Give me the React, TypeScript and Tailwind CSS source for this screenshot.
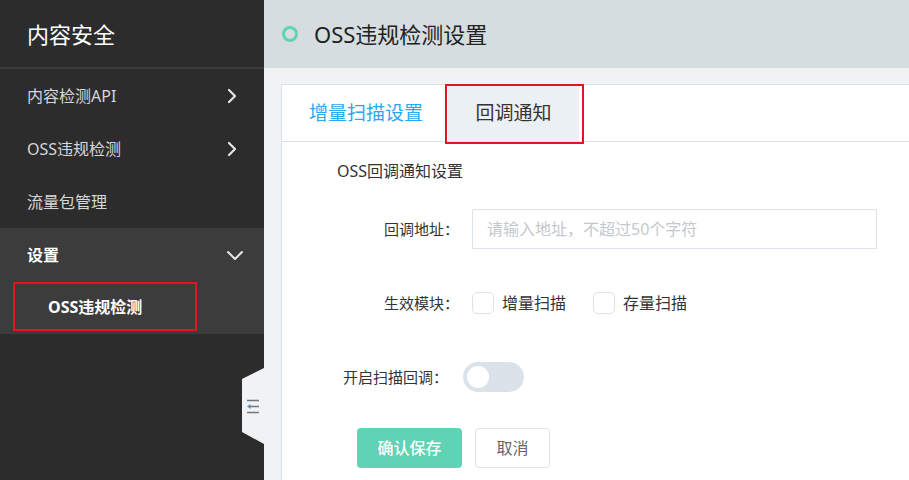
import { useState } from 'react'

const FONT = "font-['Noto_Sans','Noto_Sans_CJK_SC',sans-serif]"

function ChevronRight() {
  return (
    <svg width="10" height="16" viewBox="0 0 10 16" fill="none" aria-hidden="true">
      <path d="M2 2l6 6-6 6" stroke="#e6e6e6" strokeWidth="2.2" strokeLinecap="round" strokeLinejoin="round" />
    </svg>
  )
}

function ChevronDown() {
  return (
    <svg width="18" height="10" viewBox="0 0 18 10" fill="none" aria-hidden="true">
      <path d="M2 2l7 7 7-7" stroke="#e6e6e6" strokeWidth="2" strokeLinecap="round" strokeLinejoin="round" />
    </svg>
  )
}

function CollapseIcon() {
  return (
    <svg width="14" height="15" viewBox="0 0 14 15" fill="none" aria-hidden="true">
      <path d="M1 1.5h12M1 13.5h12" stroke="#777" strokeWidth="1.3" />
      <path d="M4 7.5h9" stroke="#777" strokeWidth="1.3" />
      <path d="M1 7.5l3.5-2.5v5z" fill="#5b8fd0" />
    </svg>
  )
}

interface MenuItem {
  readonly label: string
  readonly hasChildren: boolean
}

const MENU: readonly MenuItem[] = [
  { label: '内容检测API', hasChildren: true },
  { label: 'OSS违规检测', hasChildren: true },
  { label: '流量包管理', hasChildren: false },
]

function Sidebar() {
  return (
    <aside className="relative flex h-full w-[264px] shrink-0 flex-col bg-[#2c2c2c]">
      <div className="flex h-[69px] items-center border-b-2 border-[#3b3b3b] pl-[27px] text-[22px] leading-none text-white">
        内容安全
      </div>
      {MENU.map((item) => (
        <div
          key={item.label}
          className="flex h-[53px] items-center justify-between pl-[27px] pr-[27px] text-[16px] text-[#d8d8d8]"
        >
          <span>{item.label}</span>
          {item.hasChildren ? <ChevronRight /> : null}
        </div>
      ))}
      <div className="bg-[#3c3c3c] pb-[3px]">
        <div className="flex h-[54px] items-center justify-between pl-[27px] pr-[20px] text-[16px] font-bold text-white">
          <span>设置</span>
          <ChevronDown />
        </div>
        <div className="pl-[13px]">
          <div className="flex h-[49px] w-[184px] items-center border-2 border-[#e5141f] pl-[33px] text-[16px] font-bold text-white">
            OSS违规检测
          </div>
        </div>
      </div>

      {/* 收起侧栏把手，压在侧栏右缘 */}
      <div className="absolute right-0 top-[368px] flex h-[76px] w-[22px] items-center justify-center bg-[#f1f2f4] [clip-path:polygon(0_11px,100%_0,100%_100%,0_64px)]">
        <CollapseIcon />
      </div>
    </aside>
  )
}

function Checkbox({ label }: { readonly label: string }) {
  const [checked, setChecked] = useState(false)
  return (
    <label className="flex cursor-pointer items-center gap-[8px]">
      <span
        onClick={() => setChecked((v) => !v)}
        className={
          checked
            ? 'h-[22px] w-[22px] rounded-[5px] border border-[#5fd3b3] bg-[#5fd3b3]'
            : 'h-[22px] w-[22px] rounded-[5px] border border-[#dbe3ea] bg-white'
        }
      />
      <span className="text-[16px] text-[#333]">{label}</span>
    </label>
  )
}

function CallbackForm() {
  const [enabled, setEnabled] = useState(false)
  return (
    <div className="pl-[55px] pt-[18px] text-[#333]">
      <p className="text-[16px] leading-[22px]">OSS回调通知设置</p>

      <div className="mt-[27px] flex items-center pl-[47px]">
        <span className="w-[88px] text-[15px]">回调地址：</span>
        <input
          type="text"
          placeholder="请输入地址，不超过50个字符"
          className="h-[40px] w-[405px] border border-[#dbe3ea] px-[14px] text-[16px] outline-none placeholder:text-[#c3c8ce]"
        />
      </div>

      <div className="mt-[42px] flex items-center pl-[47px]">
        <span className="w-[88px] text-[15px]">生效模块：</span>
        <div className="flex items-center gap-[27px]">
          <Checkbox label="增量扫描" />
          <Checkbox label="存量扫描" />
        </div>
      </div>

      <div className="mt-[47px] flex items-center pl-[6px]">
        <span className="w-[120px] text-[15px]">开启扫描回调：</span>
        <button
          type="button"
          onClick={() => setEnabled((v) => !v)}
          className={
            enabled
              ? 'flex h-[30px] w-[61px] items-center justify-end rounded-full bg-[#5fd3b3] px-[4px]'
              : 'flex h-[30px] w-[61px] items-center rounded-full bg-[#dbe3ea] px-[4px]'
          }
        >
          <span className="h-[22px] w-[22px] rounded-full bg-white" />
        </button>
      </div>

      <div className="mt-[36px] flex items-center gap-[13px] pl-[20px]">
        <button
          type="button"
          className="h-[40px] w-[105px] rounded-[4px] bg-[#5fd3b3] text-[16px] font-medium text-white"
        >
          确认保存
        </button>
        <button
          type="button"
          className="h-[40px] w-[75px] rounded-[4px] border border-[#dbe3ea] bg-white text-[16px] text-[#666]"
        >
          取消
        </button>
      </div>
    </div>
  )
}

export default function App() {
  const [tab, setTab] = useState<'scan' | 'callback'>('callback')
  return (
    <div className={`flex h-[480px] w-full overflow-hidden ${FONT}`}>
      <Sidebar />
      <main className="flex min-w-0 flex-1 flex-col bg-[#f1f2f4]">
        <header className="flex h-[68px] shrink-0 items-center gap-[16px] bg-[#d5dde0] pl-[18px]">
          <span className="h-[16px] w-[16px] rounded-full border-[3.5px] border-[#5fd3b3]" />
          <h1 className="text-[22px] leading-none text-[#222]">OSS违规检测设置</h1>
        </header>
        <section className="ml-[17px] mt-[16px] flex-1 border-l border-t border-[#dbe3ea] bg-white">
          <div className="flex h-[57px] items-end border-b border-[#dbe3ea]">
            <button
              type="button"
              onClick={() => setTab('scan')}
              className={
                tab === 'scan'
                  ? 'flex h-[55px] items-center bg-[#ebf0f4] px-[27px] text-[19px] text-[#333]'
                  : 'flex h-[55px] items-center px-[27px] text-[19px] text-[#29a9f0]'
              }
            >
              增量扫描设置
            </button>
            <div className="relative ml-[-2px]">
              <button
                type="button"
                onClick={() => setTab('callback')}
                className={
                  tab === 'callback'
                    ? 'flex h-[55px] w-[131px] items-center justify-center bg-[#ebf0f4] text-[19px] text-[#333]'
                    : 'flex h-[55px] w-[131px] items-center justify-center text-[19px] text-[#29a9f0]'
                }
              >
                回调通知
              </button>
              {/* 标注框 */}
              <span className="pointer-events-none absolute -bottom-[3px] -left-[3px] -right-[5px] -top-[2px] border-2 border-[#e5141f]" />
            </div>
          </div>
          <CallbackForm />
        </section>
      </main>
    </div>
  )
}
